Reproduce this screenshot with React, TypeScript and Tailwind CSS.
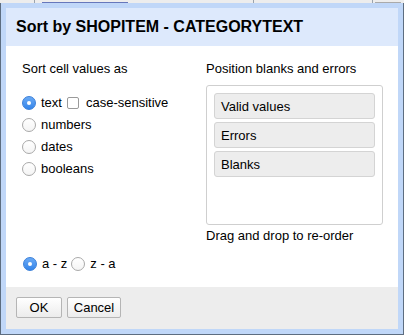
import React from "react";

function Radio({ checked }: { checked?: boolean }) {
  if (checked) {
    return (
      <span className="flex h-[14px] w-[14px] shrink-0 items-center justify-center rounded-full border border-[#3a7fd9] bg-gradient-to-b from-[#6aaaf5] to-[#3385ea]">
        <span className="h-[4px] w-[4px] rounded-full bg-white" />
      </span>
    );
  }
  return (
    <span className="h-[14px] w-[14px] shrink-0 rounded-full border border-[#a9a9a9] bg-gradient-to-b from-white to-[#f4f4f4]" />
  );
}

export default function App() {
  return (
    <div
      className="relative h-[335px] w-[404px] overflow-hidden bg-[#5d6d80] text-black"
      style={{ fontFamily: '"Liberation Sans", Arial, sans-serif' }}
    >
      {/* backdrop strip */}
      <div className="flex h-[3px] overflow-hidden bg-[#ededed]">
        <div className="h-full w-[35px] border-r border-[#9aa3ad]" />
        <div className="flex h-full w-[219px] items-end border-r border-[#9aa3ad] pl-[7px]">
          <div className="h-[1px] w-[86px] bg-[#6677bb]" />
        </div>
        <div className="w-[119px] border-r border-[#9aa3ad]" />
        <div className="flex h-full items-end pl-[2px]">
          <div className="h-[1px] w-[26px] bg-[#aaaaaa]" />
        </div>
      </div>

      {/* dialog */}
      <div className="ml-[1px] w-[402px] border-[5px] border-[#c0d7f8] bg-white">
        <div className="flex h-[38px] items-center bg-[#dde9fc] pl-[10px] text-[16px] font-bold">
          Sort by SHOPITEM - CATEGORYTEXT
        </div>

        <div className="flex h-[241px] flex-col text-[13px] leading-[15px]">
          <div className="flex">
            <div className="w-[200px] pl-[16px] pt-[15px]">
              <div>Sort cell values as</div>
              <div className="mt-[19px] flex flex-col gap-[7px]">
                <div className="flex h-[15px] items-center">
                  <Radio checked />
                  <span className="ml-[5px]">text</span>
                  <span className="ml-[5px] h-[12px] w-[12px] rounded-[2px] border border-[#9a9a9a] bg-white" />
                  <span className="ml-[7px]">case-sensitive</span>
                </div>
                <div className="flex h-[15px] items-center">
                  <Radio />
                  <span className="ml-[5px]">numbers</span>
                </div>
                <div className="flex h-[15px] items-center">
                  <Radio />
                  <span className="ml-[5px]">dates</span>
                </div>
                <div className="flex h-[15px] items-center">
                  <Radio />
                  <span className="ml-[5px]">booleans</span>
                </div>
              </div>
            </div>
            <div className="pt-[15px]">
              <div>Position blanks and errors</div>
              <div className="mt-[9px] flex h-[140px] w-[177px] flex-col gap-[3px] rounded-[3px] border border-[#cfcfcf] px-[7px] pt-[7px]">
                <div className="flex h-[26px] items-center rounded-[3px] border border-[#d4d4d4] bg-[#ededed] pl-[6px]">
                  Valid values
                </div>
                <div className="flex h-[26px] items-center rounded-[3px] border border-[#d4d4d4] bg-[#ededed] pl-[6px]">
                  Errors
                </div>
                <div className="flex h-[26px] items-center rounded-[3px] border border-[#d4d4d4] bg-[#ededed] pl-[6px]">
                  Blanks
                </div>
              </div>
              <div className="mt-[3px]">Drag and drop to re-order</div>
            </div>
          </div>
          <div className="mt-[13px] flex h-[15px] items-center pl-[17px]">
            <Radio checked />
            <span className="ml-[5px]">a - z</span>
            <span className="ml-[4px] flex">
              <Radio />
            </span>
            <span className="ml-[5px]">z - a</span>
          </div>
        </div>

        <div className="flex h-[42px] items-start gap-[5px] bg-[#ededed] pl-[10px] pt-[10px] text-[13px]">
          <button className="h-[21px] w-[46px] rounded-[2px] border border-[#b5b5b5] bg-gradient-to-b from-white to-[#ececec]">
            OK
          </button>
          <button className="h-[21px] w-[54px] rounded-[2px] border border-[#b5b5b5] bg-gradient-to-b from-white to-[#ececec]">
            Cancel
          </button>
        </div>
      </div>
    </div>
  );
}
